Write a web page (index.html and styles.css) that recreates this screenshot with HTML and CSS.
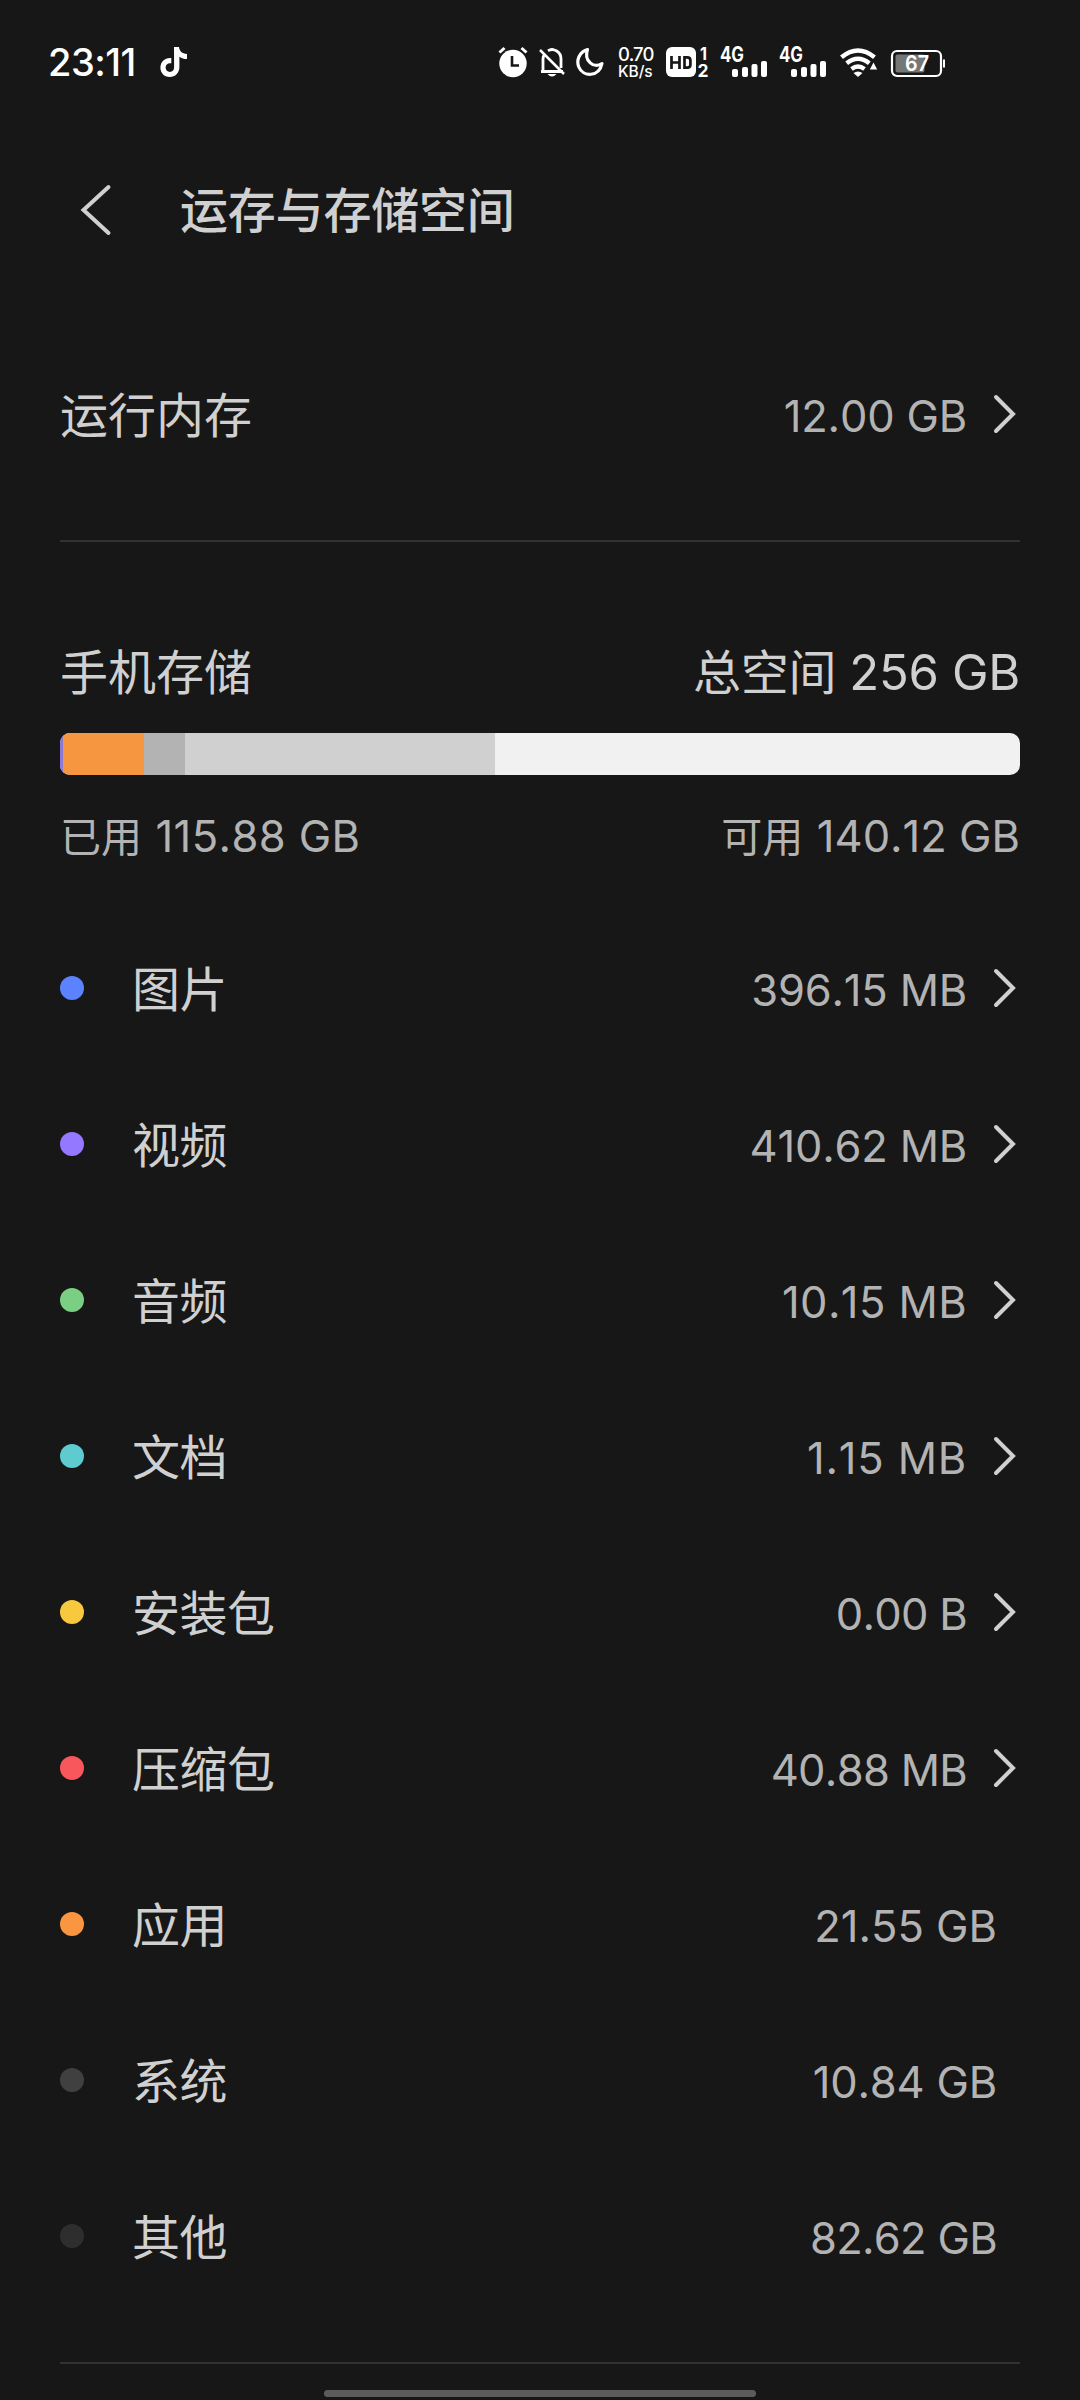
FILE: index.html
```html
<!DOCTYPE html>
<html lang="zh-CN">
<head>
<meta charset="utf-8">
<title>运存与存储空间</title>
<link rel="stylesheet" href="styles.css">
</head>
<body>
<svg class="defs" width="0" height="0">
  <symbol id="chevron" viewBox="0 0 24 40"><path d="M3 3 20 20 3 37"/></symbol>
  <symbol id="signal" viewBox="0 0 47 32">
    <text x="0" y="16" textLength="24" lengthAdjust="spacingAndGlyphs" class="signal-text">4G</text>
    <rect x="12" y="23" width="6" height="8" rx="2"/><rect x="22" y="21" width="6" height="10" rx="2"/><rect x="31.500" y="18" width="6" height="13" rx="2"/><rect x="41" y="15" width="6" height="16" rx="2"/>
  </symbol>
</svg>
<div class="status-bar">
  <span class="clock">23:11</span>
  <svg class="note" width="27" height="32" viewBox="0 0 27 32"><path d="M14 1h5c.5 4.200 3 6.700 8 7v5c-3 0-5.500-.8-7.600-2.300V21c0 6-4.200 10-9.600 10C4 31 .4 26.800.4 21.500.4 15.800 5 11.300 11.300 12v5.300c-3.300-.7-5.700 1.300-5.700 4.200 0 2.600 2 4.400 4.300 4.400 2.500 0 4.200-1.800 4.200-4.700z"/></svg>
  <div class="status-icons">
    <svg width="30" height="32" viewBox="0 0 30 32"><circle cx="15" cy="17.500" r="13.700"/><path class="line" d="M1.500 6.500 6.500 2M28.500 6.500 23.500 2" stroke-width="3"/><path class="cut" d="M14 10v9.500h7" stroke-width="2.600"/></svg>
    <svg class="bell" width="26" height="32" viewBox="0 0 26 32"><path class="line" d="M2 25.500h22M4 25V13q0-3 2-5M9 4.800C15 1.500 22 6 22 13v9" stroke-width="2.800"/><path d="M10 4q3-4 6 0zM8.500 28h9q-4.500 5-9 0z"/><path class="line" d="M1 4 25 28" stroke-width="2.500"/></svg>
    <svg class="moon" width="28" height="32" viewBox="0 0 28 32"><path class="line" d="M11.500 3.500C3 6 .2 14.500 2.800 21 7 31 23 31.500 26 17.500 18 23 7.500 15 11.500 3.500Z" stroke-width="3.200" stroke-linejoin="round"/></svg>
    <span class="speed"><span class="speed-value">0.70</span><span class="speed-unit">KB/s</span></span>
    <svg class="hd" width="42" height="32" viewBox="0 0 42 32"><rect x="0" y="1" width="30" height="30" rx="6"/><path class="cut" d="M5.500 10v13M13.500 10v13M5.500 16.500h8M18.500 11.300v10.400h2.700q3.200 0 3.200-3v-4.400q0-3-3.200-3z" stroke-width="2.700"/><text x="34" y="13.500" class="sim" textLength="7" lengthAdjust="spacingAndGlyphs">1</text><text x="31.500" y="30.500" class="sim" textLength="11" lengthAdjust="spacingAndGlyphs">2</text></svg>
    <svg width="47" height="32"><use href="#signal"/></svg>
    <svg width="47" height="32"><use href="#signal"/></svg>
    <svg class="wifi" width="37" height="32" viewBox="0 0 37 32"><path class="line" d="M1.500 11.200Q18 -2.200 34.500 11.200" stroke-width="4.500"/><path class="line" d="M6.700 17.200Q18 8.200 29.300 17.200" stroke-width="4.500"/><path class="line" d="M11.500 23Q18 18 24.500 23" stroke-width="4.300"/><path d="M13.500 27q4.500-3 9 0L18 31zM33.500 16.500l3.700 7h-7.400z"/></svg>
    <svg class="battery" width="54" height="32" viewBox="0 0 54 32"><rect class="line" x="1" y="5" width="49" height="25" rx="5" stroke-width="2.200"/><rect class="charge" x="4.500" y="8.500" width="29" height="18" rx="2"/><path class="line" d="M53 13.500v8" stroke-width="2"/><text x="14" y="25.300" class="percent" textLength="24" lengthAdjust="spacingAndGlyphs">67</text></svg>
  </div>
</div>
<header class="title-bar">
  <svg class="back" width="32" height="52" viewBox="0 0 32 52"><path d="M28.500 3 3.500 26 28.500 49"/></svg>
  <h1>运存与存储空间</h1>
</header>
<main>
  <section class="memory row">
    <span class="label">运行内存</span><span class="value snug">12.00 GB</span><svg class="arrow"><use href="#chevron"/></svg>
  </section>
  <section class="storage">
    <div class="summary"><span>手机存储</span><span class="total">总空间 <b>256 GB</b></span></div>
    <div class="bar"><i class="media" style="width:3px"></i><i class="apps" style="width:81px"></i><i class="system" style="width:41px"></i><i class="other" style="width:310px"></i></div>
    <div class="usage"><span>已用 <b class="used">115.88 GB</b></span><span>可用 <b class="free">140.12 GB</b></span></div>
    <ul>
      <li class="row"><i class="dot blue"></i><span class="label">图片</span><span class="value snug">396.15 MB</span><svg class="arrow"><use href="#chevron"/></svg></li>
      <li class="row"><i class="dot purple"></i><span class="label">视频</span><span class="value snug">410.62 MB</span><svg class="arrow"><use href="#chevron"/></svg></li>
      <li class="row"><i class="dot green"></i><span class="label">音频</span><span class="value loose">10.15 MB</span><svg class="arrow"><use href="#chevron"/></svg></li>
      <li class="row"><i class="dot cyan"></i><span class="label">文档</span><span class="value looser">1.15 MB</span><svg class="arrow"><use href="#chevron"/></svg></li>
      <li class="row"><i class="dot yellow"></i><span class="label">安装包</span><span class="value tight">0.00 B</span><svg class="arrow"><use href="#chevron"/></svg></li>
      <li class="row"><i class="dot red"></i><span class="label">压缩包</span><span class="value tight">40.88 MB</span><svg class="arrow"><use href="#chevron"/></svg></li>
      <li class="row plain"><i class="dot orange"></i><span class="label">应用</span><span class="value">21.55 GB</span></li>
      <li class="row plain"><i class="dot gray"></i><span class="label">系统</span><span class="value snug">10.84 GB</span></li>
      <li class="row plain"><i class="dot dark"></i><span class="label">其他</span><span class="value tight">82.62 GB</span></li>
    </ul>
  </section>
</main>
<div class="home-indicator"></div>
</body>
</html>
```
FILE: styles.css
```css
* { box-sizing: border-box; }
body {
  margin: 0;
  width: 1080px;
  height: 2400px;
  overflow: hidden;
  background: #171717;
  color: #d0d0d0;
  font-family: Inter, "Noto Sans CJK SC", sans-serif;
  display: flex;
  flex-direction: column;
}
svg { display: block; flex: none; overflow: visible; }
.defs { display: none; }
b { font-weight: 400; }

.status-bar {
  height: 110px;
  padding: 46px 0 0 48px;
  display: flex;
  align-items: flex-start;
  color: #fff;
  fill: #fff;
}
.clock { width: 112px; font-size: 38px; line-height: 33px; font-weight: 500; letter-spacing: -0.5px; white-space: nowrap; }
.status-icons { display: flex; margin-left: 311px; gap: 12px; }
.status-icons .line { fill: none; stroke: #fff; }
.status-icons .cut { fill: none; stroke: #171717; }
.bell { margin-left: -1px; }
.moon { margin: 0 2px 0 -1px; }
.wifi { margin-left: 2px; }
.battery { margin-left: 2px; }
.charge { fill: #767676; }
.signal-text { font-size: 21px; font-weight: 700; }
.sim { font-size: 17.5px; font-weight: 700; }
.percent { font-size: 22px; font-weight: 600; }
.speed { width: 36px; display: flex; flex-direction: column; line-height: 17px; font-weight: 500; white-space: nowrap; }
.speed-value { font-size: 18.5px; letter-spacing: -0.8px; }
.speed-unit { font-size: 15.5px; letter-spacing: -0.1px; }

.title-bar { height: 200px; padding-left: 80px; display: flex; align-items: center; }
.back { fill: none; stroke: #d0d0d0; stroke-width: 4; stroke-linecap: round; }
h1 { margin: 1px 0 0 68px; font-size: 48px; font-weight: 500; line-height: 60px; letter-spacing: -0.2px; }

main { padding: 0 60px; }
.row { display: flex; align-items: center; font-size: 48px; line-height: 60px; }
.label { flex: 1; padding-top: 4px; }
.value { padding-top: 4px; font-size: 43.5px; color: #b3b3b3; font-kerning: none; }
.snug { letter-spacing: -0.2px; }
.tight { letter-spacing: -0.7px; }
.loose { letter-spacing: 0.4px; }
.looser { letter-spacing: 0.8px; }
.arrow { width: 24px; height: 40px; margin: 0 3px 0 26px; fill: none; stroke: #d0d0d0; stroke-width: 4; stroke-linecap: round; }
.memory { height: 232px; padding-bottom: 22px; border-bottom: 2px solid #323232; }
.summary { height: 191px; padding-top: 101px; display: flex; justify-content: space-between; font-size: 48px; line-height: 60px; }
.total { letter-spacing: -0.3px; }
.total b { font-size: 49px; }
.bar { height: 42px; border-radius: 10px; overflow: hidden; display: flex; background: #f1f1f1; }
.bar .media { background: #8b78d8; }
.bar .apps { background: #f79640; }
.bar .system { background: #b3b3b3; }
.bar .other { background: #d0d0d0; }
.usage { height: 135px; padding-top: 31px; display: flex; justify-content: space-between; font-size: 41px; line-height: 60px; color: #b3b3b3; }
.usage b { margin-left: 2px; font-size: 43.5px; font-kerning: none; }
.usage .used { letter-spacing: 0.4px; }
ul { margin: 0; padding: 0; height: 1454px; list-style: none; border-bottom: 2px solid #323232; }
li.row { height: 156px; }
li .label { letter-spacing: -0.5px; }
.dot { width: 24px; height: 24px; margin-right: 48px; border-radius: 50%; }
.plain .value { margin-right: 23px; }
.blue { background: #5b82ff; }
.purple { background: #9478ff; }
.green { background: #7acf83; }
.cyan { background: #5dcbd0; }
.yellow { background: #f8c83f; }
.red { background: #f8585b; }
.orange { background: #fb9640; }
.gray { background: #404040; }
.dark { background: #2e2e2e; }
.home-indicator { width: 432px; height: 7px; margin: 26px 0 0 324px; border-radius: 4px; background: #5c5c5c; }
```
